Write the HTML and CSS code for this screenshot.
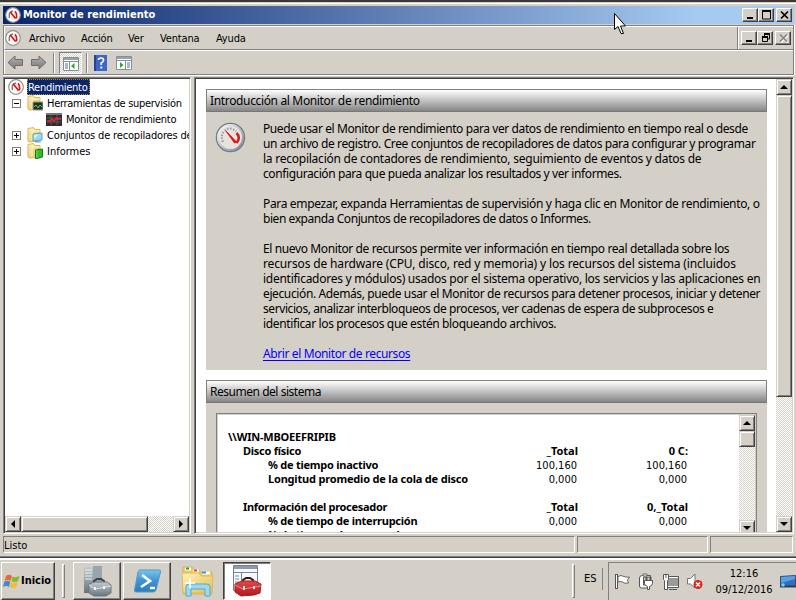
FILE: index.html
```html
<!DOCTYPE html>
<html lang="es">
<head>
<meta charset="utf-8">
<title>Monitor de rendimiento</title>
<link rel="stylesheet" href="styles.css">
</head>
<body>
<svg class="defs" width="0" height="0">
  <defs>
    <linearGradient id="folder" x1="0" y1="0" x2="1" y2="1"><stop offset="0" stop-color="#fff3b8"/><stop offset="1" stop-color="#e2bd52"/></linearGradient>
    <linearGradient id="ps" x1="0" y1="0" x2="0" y2="1"><stop offset="0" stop-color="#7cc4ea"/><stop offset=".5" stop-color="#3d93cf"/><stop offset="1" stop-color="#2e7cbc"/></linearGradient>
    <linearGradient id="steel" x1="0" y1="0" x2="0" y2="1"><stop offset="0" stop-color="#c3ccd0"/><stop offset="1" stop-color="#66757d"/></linearGradient>
    <linearGradient id="red" x1="0" y1="0" x2="0" y2="1"><stop offset="0" stop-color="#e2494a"/><stop offset="1" stop-color="#b0161c"/></linearGradient>
    <linearGradient id="arrow" x1="0" y1="0" x2="0" y2="1"><stop offset="0" stop-color="#b4b4b4"/><stop offset="1" stop-color="#777"/></linearGradient>
    <linearGradient id="ring" x1="0" y1="0" x2="1" y2="1"><stop offset="0" stop-color="#fff"/><stop offset="1" stop-color="#79828a"/></linearGradient>
    <symbol id="gauge" viewBox="0 0 16 16"><circle cx="8" cy="8" r="7.3" fill="#f6f5f3" stroke="#8d9090" stroke-width="1.2"/><circle cx="8" cy="8" r="5.9" fill="none" stroke="#fff"/><path d="M4.300 11V7.200Q5 4.500 8 4.200" fill="none" stroke="#777" stroke-width="1.300"/><path d="M5.300 5 10.500 11.500M9.800 4.500Q12 5.500 11.500 11.500" fill="none" stroke="#e00d10" stroke-width="1.600"/></symbol>
    <symbol id="dir" viewBox="0 0 16 16"><path d="M1 1.500 6.500.5 8 2.500h5V14L2 15 .8 13Z" fill="url(#folder)" stroke="#d2a947" stroke-width=".8"/><path d="M5 2v11.500M5 4h8" stroke="#fff7cd" fill="none"/></symbol>
  </defs>
</svg>

<div class="window">
  <header class="titlebar">
    <svg class="i16"><use href="#gauge"/></svg>
    <h1>Monitor de rendimiento</h1>
    <div class="controls">
      <span class="btn"><svg width="12" height="10"><path d="M2 7h6v2H2z"/></svg></span>
      <span class="btn"><svg width="12" height="10"><path d="M1.500 1v8h8V1z" fill="none" stroke="#000"/><path d="M1 0h9v2H1z"/></svg></span>
      <span class="btn close"><svg width="12" height="10"><path d="m2 1.500 7 7m0-7-7 7" stroke="#000" stroke-width="1.700"/></svg></span>
    </div>
  </header>

  <div class="bars">
    <nav class="menubar">
      <svg class="i16"><use href="#gauge"/></svg>
      <span class="m1">Archivo</span><span class="m2">Acción</span><span class="m3">Ver</span><span class="m4">Ventana</span><span class="m5">Ayuda</span>
      <div class="mdi">
        <span class="btn"><svg width="12" height="10"><path d="M2 7h6v2H2z"/></svg></span>
        <span class="btn"><svg width="12" height="10"><path d="M4 0h6v2H4zM2 3h6v2H2z"/><path d="M4.500 1v2M9.500 1v5H8M2.500 4v4.500h5V4" fill="none" stroke="#000"/></svg></span>
        <span class="btn close"><svg width="12" height="10"><path d="m3 2.500 7 7m0-7-7 7" stroke="#fff" stroke-width="1.500"/><path d="m2 1.500 7 7m0-7-7 7" stroke="#808080" stroke-width="1.500"/></svg></span>
      </div>
    </nav>
    <div class="toolbar">
      <svg width="17" height="15" class="back"><path d="M1 7.500 8 1v3.500h7.500v6H8V14Z" fill="url(#arrow)" stroke="#6c6c6c"/></svg>
      <svg width="17" height="15" class="fwd"><path d="M16 7.500 9 1v3.500H1.500v6H9V14Z" fill="url(#arrow)" stroke="#6c6c6c"/></svg>
      <i class="sep s1"></i>
      <span class="toggled"><svg width="16" height="14"><path d="M.5.5h15v13H.5z" fill="#fff" stroke="#868e96"/><path d="M1 1h14v2H1z" fill="#99a2ac"/><path d="M1 4.500h14M6.500 5v8" stroke="#868e96"/><path d="M2 7h3M2 9h3M2 11h3" stroke="#4c6fb0"/><path d="M11.500 6v6L8 9z" fill="#2caa22"/></svg></span>
      <i class="sep s2"></i>
      <svg width="13" height="16" class="help"><path d="M0 0h13v16H0z" fill="#3d66c8"/><path d="M0 0h2v16H0z" fill="#2144a0"/><path d="M4.500 5Q4.500 3 7 3t2.500 2.200Q9.500 7 7.200 8v2" fill="none" stroke="#fff" stroke-width="1.700"/><path d="M6.300 11.500h2v2h-2z" fill="#fff"/></svg>
      <svg width="16" height="14" class="show"><path d="M.5.5h15v13H.5z" fill="#fff" stroke="#868e96"/><path d="M1 1h14v2H1z" fill="#99a2ac"/><path d="M1 4.500h14M9.500 5v8" stroke="#868e96"/><path d="M11 7h3M11 9h3M11 11h3" stroke="#4c6fb0"/><path d="M4 6v6L7.500 9z" fill="#2caa22"/></svg>
    </div>
  </div>

  <div class="panes">
    <aside class="pane tree-pane">
      <ul class="tree">
        <li class="r0"><svg class="i16"><use href="#gauge"/></svg><span class="sel">Rendimiento</span></li>
        <li class="r1"><i class="box"></i><svg class="i16"><use href="#dir"/><path d="M6 7h10v8H6z" fill="#262e28" stroke="#929b90"/><path d="m7 12 2-2 2 3 2-3 2 2" fill="none" stroke="#4bd34b"/></svg><span class="t1">Herramientas de supervisión</span></li>
        <li class="r2"><svg class="i16"><path d="M0 2h16v13H0z" fill="#302c2e"/><path d="M0 2h16v2H0z" fill="#77787a"/><path d="M1 7h14M1 11h14M5 4v10M11 4v10" stroke="#5b5456"/><path d="M1 10h3l2-2 2 2 3-3 1 1h3" fill="none" stroke="#ef2733" stroke-width="1.500"/></svg><span class="t2">Monitor de rendimiento</span></li>
        <li class="r1"><i class="box plus"></i><svg class="i16"><use href="#dir"/><path d="m6 7 9-1v7l-9 1z" fill="#9cd8ef" stroke="#5aa6c8"/><path d="m7 8 5-1-5 5z" fill="#d6f3fd"/><path d="M8 15h6" stroke="#7b98a5"/></svg><span class="t3">Conjuntos de recopiladores de datos</span></li>
        <li class="r1"><i class="box plus"></i><svg class="i16"><use href="#dir"/><path d="m8.500 7 7-1v8l-7 2z" fill="#37b72c" stroke="#157c16"/><path d="M10 7v8" stroke="#76dc68"/></svg><span class="t4">Informes</span></li>
      </ul>
      <div class="hscroll"><span class="sb"><svg width="8" height="8"><path d="M6 0v8L2 4z"/></svg></span><span class="thumb"></span><span class="track"></span><span class="sb"><svg width="8" height="8"><path d="M2 0v8l4-4z"/></svg></span></div>
    </aside>

    <main class="pane main-pane">
      <div class="content">
        <section class="card intro">
          <h2 class="h-a">Introducción al Monitor de rendimiento</h2>
          <div class="intro-body">
            <svg width="31" height="31" viewBox="0 0 31 31"><circle cx="15.500" cy="15.500" r="14" fill="#e6e3de" stroke="#707b84" stroke-width="1.500"/><circle cx="15.500" cy="15.500" r="12.500" fill="none" stroke="url(#ring)" stroke-width="2"/><path d="M8 20Q5 13 10 8.500t11 1" fill="none" stroke="#999" stroke-width="2" stroke-dasharray="1.500 1.500"/><path d="M21.500 11Q26 15.500 21.500 21" fill="none" stroke="#d0201f" stroke-width="2.500"/><path d="m11 9 10.500 11-2 1Z" fill="#e11518" stroke="#e11518"/></svg>
            <div class="text">
              <p><span class="a1">Puede usar el Monitor de rendimiento para ver datos de rendimiento en tiempo real o desde</span><span class="a2">un archivo de registro. Cree conjuntos de recopiladores de datos para configurar y programar</span><span class="a3">la recopilación de contadores de rendimiento, seguimiento de eventos y datos de</span><span class="a4">configuración para que pueda analizar los resultados y ver informes.</span></p>
              <p><span class="a5">Para empezar, expanda Herramientas de supervisión y haga clic en Monitor de rendimiento, o</span><span class="a6">bien expanda Conjuntos de recopiladores de datos o Informes.</span></p>
              <p><span class="a7">El nuevo Monitor de recursos permite ver información en tiempo real detallada sobre los</span><span class="a8">recursos de hardware (CPU, disco, red y memoria) y los recursos del sistema (incluidos</span><span class="a9">identificadores y módulos) usados por el sistema operativo, los servicios y las aplicaciones en</span><span class="a10">ejecución. Además, puede usar el Monitor de recursos para detener procesos, iniciar y detener</span><span class="a11">servicios, analizar interbloqueos de procesos, ver cadenas de espera de subprocesos e</span><span class="a12">identificar los procesos que estén bloqueando archivos.</span></p>
              <p><a class="a13">Abrir el Monitor de recursos</a></p>
            </div>
          </div>
        </section>
        <section class="card summary">
          <h2 class="h-b">Resumen del sistema</h2>
          <div class="report">
            <div class="rows">
              <div class="row l0"><b class="b1">\\WIN-MBOEEFRIPIB</b></div>
              <div class="row l1"><b class="b2">Disco físico</b><b>_Total</b><b>0 C:</b></div>
              <div class="row l2"><b class="b3">% de tiempo inactivo</b><span>100,160</span><span>100,160</span></div>
              <div class="row l2"><b class="b4">Longitud promedio de la cola de disco</b><span>0,000</span><span>0,000</span></div>
              <div class="row"></div>
              <div class="row l1"><b class="b5">Información del procesador</b><b>_Total</b><b>0,_Total</b></div>
              <div class="row l2"><b class="b6">% de tiempo de interrupción</b><span>0,000</span><span>0,000</span></div>
              <div class="row l2"><b class="b7">% de tiempo de procesador</b></div>
            </div>
            <div class="vscroll inner"><span class="sb"><svg width="8" height="8"><path d="M0 6h8L4 2z"/></svg></span><span class="thumb"></span><span class="track"></span><span class="sb"><svg width="8" height="8"><path d="M0 2h8L4 6z"/></svg></span></div>
          </div>
        </section>
      </div>
      <div class="vscroll outer"><span class="sb"><svg width="8" height="8"><path d="M0 6h8L4 2z"/></svg></span><span class="thumb"></span><span class="track"></span><span class="sb"><svg width="8" height="8"><path d="M0 2h8L4 6z"/></svg></span></div>
    </main>
  </div>

  <footer class="status"><span>Listo</span><span></span><span></span></footer>
</div>

<div class="taskbar">
  <div class="start"><svg width="17" height="16" viewBox="0 0 17 16"><path d="M3 3Q6 .5 9 3L7.500 8Q4.500 6 1.500 8Z" fill="#ed6a2e"/><path d="M9.500 3.500Q12.500 5 16.500 3L15 8Q12 10 8.500 8.300Z" fill="#82b93c"/><path d="M1.300 8.700Q4 7 7.200 8.800L6 14Q3 12 0 14Z" fill="#4488d4"/><path d="M8 9Q11 10.800 15 8.800L13.500 14Q10.500 16 6.800 14.300Z" fill="#f4c02f"/></svg><b>Inicio</b></div>
  <i class="grip g1"></i>
  <div class="task t-a"><svg width="32" height="34" viewBox="0 0 32 34"><path d="M3 3h9v26H3z" fill="url(#steel)"/><path d="M12 2h9v20h-9z" fill="#9aa5ab"/><path d="M4 6h7M4 9h7M4 12h7M4 15h7" stroke="#eef1f2"/><path d="M13 19v-2l3-2h4l3 2v2" fill="none" stroke="#37434a" stroke-width="2"/><path d="m8 20 6-2h12l4 3v8l-5 3H13l-5-3z" fill="url(#steel)" stroke="#6b7980"/><path d="m8 21 6 4 16-3" fill="none" stroke="#dfe6e8"/><path d="M13 23h2v3h-2zm9-1h2v3h-2z" fill="#f2f4f4"/></svg></div>
  <div class="task t-b"><svg width="32" height="28" viewBox="0 0 32 28"><path d="M9 3h19q2 0 1.500 2L25 23q-.5 2-3 2H5q-2 0-1.500-2L7 5q.5-2 2-2Z" fill="url(#ps)" stroke="#4a9bd0"/><path d="m11 8 8 6-9 6m9 1h5" fill="none" stroke="#fff" stroke-width="2.600"/></svg></div>
  <div class="task t-c"><svg width="33" height="32" viewBox="0 0 33 32"><path d="M2 2h9l2 3h5l1 2h12v22H2z" fill="#edc966" stroke="#d9b457"/><path d="M4 4h6M12 6h6M21 8h8" stroke="#fff" stroke-width="3"/><path d="M5 3.500h3" stroke="#21a537" stroke-width="2"/><path d="M13 5.500h3" stroke="#df4034" stroke-width="2"/><path d="M21 7.500h4" stroke="#3a92d4" stroke-width="2"/><path d="M1 8h17l2 3h12l-1 17H2z" fill="url(#folder)" stroke="#dcb95c"/><path d="M5 31V22q0-3 3-3h18q3 0 3 3v9h-5v-7H10v7z" fill="#9bd8f2" stroke="#5aa6cf"/><path d="M9 13v10M4 18h10" stroke="#fff" stroke-width="1.500"/></svg></div>
  <div class="task t-d"><svg width="32" height="34" viewBox="0 0 32 34"><path d="M2.500 1.500h24v25h-24z" fill="#f8f9fa" stroke="#77818d"/><path d="M3 2h23v3H3z" fill="#8e99a8"/><path d="M3 8.500h23M10.500 9v17M4 12h4M4 15h4M4 18h4" stroke="#7687a4"/><path d="M12 18v-2l3-2h4l3 2v2" fill="none" stroke="#33191a" stroke-width="2"/><path d="m4 20 7-3h13l6 3-1 9-6 2-13 1-6-4z" fill="url(#red)" stroke="#a8191c"/><path d="m4 21 8 4 18-3" fill="none" stroke="#ee8989"/><path d="M12 22h2v4h-2zm10 0h2v3h-2z" fill="#f3e8e8"/></svg></div>
  <i class="grip g2"></i>
  <span class="lang">ES</span>
  <i class="grip g3"></i>
  <div class="tray">
    <svg width="18" height="18"><path d="M2.500 1v15" stroke="#555" stroke-width="3"/><path d="M2.500 2v13" stroke="#fff"/><path d="M4 3.500q3-2 6 0 2 1 5.500.5l-2 3 1 3q-4 1-6-1-2-1-4.500 0z" fill="#fff" stroke="#666"/></svg>
    <svg width="18" height="18"><path d="M1.500 5v8q0 2 2 2h8v-3h-6V4h7V2.500h-8Q1.500 2.500 1.500 5Z" fill="#fff" stroke="#555"/><path d="M5 1h4v2H5z" fill="#fff" stroke="#666"/><path d="M8.500 4v4m4-4v4" stroke="#555" stroke-width="2"/><path d="M6.500 7.500h8v3q-1 3-3 3v3h-2v-3q-3-1-3-3z" fill="#fff" stroke="#555"/></svg>
    <svg width="18" height="18"><path d="M5.500 4.500h11v9h-11z" fill="#999" stroke="#fff"/><path d="M4.500 3.500h12v11h-12zM7 16.500h8" fill="none" stroke="#555"/><path d="M1.500 1.500h5v5l-1 1v9h-3v-9l-1-1zM4 1v4" fill="#fff" stroke="#555"/></svg>
    <svg width="18" height="18"><path d="M1.500 5.500h3L9 1v14l-4.500-4h-3z" fill="#fff" stroke="#777"/><circle cx="12" cy="11.500" r="4.500" fill="#d9251c"/><path d="m10 9.500 4 4m0-4-4 4" stroke="#fff" stroke-width="1.500"/></svg>
    <div class="clock"><span>12:16</span><span>09/12/2016</span></div>
    <svg width="16" height="13" class="desk"><path d="M.5 1.500 15.500.5v10L.5 11.500z" fill="#2c70c4" stroke="#285188"/><path d="m1 2 14-1v3L1 8z" fill="#5b9fe2"/><path d="M0 10.500h16v2H0z" fill="#34404c"/><circle cx="3" cy="10" r="1.800" fill="#6fd0ef"/></svg>
  </div>
</div>

<svg class="cursor" width="13" height="22"><path d="M.5.5v16L4 13.500l3 7h2.500l-3-7.500h5z" fill="#fff" stroke="#000"/></svg>
</body>
</html>
```
FILE: styles.css
```css
* { box-sizing: border-box; }
html, body { margin: 0; padding: 0; }
body {
  width: 796px; height: 600px; overflow: hidden; position: relative;
  background: #d4d0c8; color: #000;
  font: 11px/16px "DejaVu Sans Condensed", "DejaVu Sans", sans-serif;
}
svg { display: block; flex: none; }
i { display: block; flex: none; }
.defs { position: absolute; }
.i16 { width: 16px; height: 16px; }

.window {
  height: 558px; border-top: 2px solid #3b3835; border-bottom: 1px solid #404040;
  display: flex; flex-direction: column; padding-left: 3px;
  box-shadow: inset 0 1px #d4d0c8, inset 0 2px #fff, inset 0 -1px #808080;
}
.titlebar {
  height: 18px; margin: 4px 2px 1px 0; flex: none; padding: 1px 2px;
  background: linear-gradient(90deg, #0a246a, #a6caf0 88%);
  display: flex; align-items: center;
}
.titlebar h1 { margin: 0 0 0 2px; color: #fff; font-size: 11px; font-weight: bold; white-space: nowrap; }
.controls, .mdi { display: flex; align-items: center; margin-left: auto; }
.btn {
  width: 16px; height: 14px; padding: 1px 2px; background: #d4d0c8;
  border: 1px solid; border-color: #fff #404040 #404040 #fff;
  box-shadow: inset -1px -1px #808080; overflow: hidden;
}
.btn.close { margin-left: 2px; }

.bars { height: 50px; flex: none; margin-right: 2px; border: 1px solid #808080; box-shadow: 0 1px #fff, 1px 0 #fff; }
.menubar { height: 24px; border-top: 1px solid #fff; border-left: 1px solid #fff; border-bottom: 1px solid #808080; display: flex; align-items: center; }
.menubar span { white-space: nowrap; }
.menubar > span { padding-top: 1px; letter-spacing: -0.15px; }
.menubar .m1 { width: 52px; margin-left: 8px; }
.m2 { width: 47px; }
.m3 { width: 32px; }
.m4 { width: 56px; }
.mdi { align-self: stretch; border-left: 1px solid #808080; box-shadow: inset 1px 0 #fff; padding: 0 2px 0 3px; }
.toolbar { height: 24px; border-top: 1px solid #fff; border-left: 1px solid #fff; display: flex; align-items: center; padding-left: 2px; }
.fwd { margin-left: 6px; }
.sep { width: 2px; height: 20px; border-left: 1px solid #808080; border-right: 1px solid #fff; }
.s1 { margin-left: 6px; }
.s2 { margin-left: 4px; }
.toggled { width: 23px; height: 22px; margin-left: 4px; padding: 4px 3px; background: repeating-conic-gradient(#fff 0 25%, #d4d0c8 0 50%) 0 0 / 2px 2px; border: 1px solid; border-color: #808080 #fff #fff #808080; }
.help { margin-left: 6px; }
.show { margin-left: 9px; }

.panes { flex: none; height: 457px; margin-top: 2px; display: flex; gap: 3px; }
.pane { border: 1px solid; border-color: #808080 #fff #fff #808080; background: #fff; overflow: hidden; box-shadow: inset 1px 1px #404040, inset -1px -1px #d4d0c8; padding: 1px; }
.tree-pane { width: 188px; display: flex; flex-direction: column; }
.main-pane { width: 600px; display: flex; }
.tree { list-style: none; margin: 0; padding: 0; flex: 1; overflow: hidden; }
.tree li { display: flex; height: 16px; align-items: center; white-space: nowrap; }
.tree .r0 { padding-left: 3px; }
.tree .r1 { padding-left: 7px; }
.tree .r2 { padding-left: 41px; }
.tree span { margin-left: 4px; height: 16px; line-height: 17px; }
.tree .sel { background: #0a246a; color: #fff; margin-left: 3px; padding: 0 2px 0 1px; width: 63px; outline: 1px dotted #b09030; outline-offset: -1px; letter-spacing: -0.27px; }
.t1 { letter-spacing: -0.3px; }
.t2 { letter-spacing: -0.27px; }
.t3 { letter-spacing: -0.17px; }
.box { width: 9px; height: 9px; border: 1px solid #808080; margin-right: 6px; background: linear-gradient(#000, #000) center / 5px 1px no-repeat; }
.box.plus { background: linear-gradient(#000, #000) center / 5px 1px no-repeat, linear-gradient(#000, #000) center / 1px 5px no-repeat; }

.hscroll { height: 16px; display: flex; flex: none; }
.vscroll { width: 16px; display: flex; flex-direction: column; flex: none; }
.sb, .thumb { background: #d4d0c8; border: 1px solid; border-color: #d4d0c8 #404040 #404040 #d4d0c8; box-shadow: inset 1px 1px #fff, inset -1px -1px #808080; flex: none; }
.sb { width: 16px; height: 16px; padding: 3px; }
.track { flex: 1; background: repeating-conic-gradient(#fff 0 25%, #d4d0c8 0 50%) 0 0 / 2px 2px; }
.hscroll .thumb { width: 127px; }
.outer .thumb { height: 302px; }
.inner .thumb { height: 16px; }

.content { flex: 1; padding: 10px 10px 0; overflow: hidden; }
.content, .card, .text { min-width: 0; }
.card { background: #d4d0c8; width: 561px; }
.card h2 {
  margin: 0; height: 23px; padding-left: 3px; border: 1px solid #808080; border-bottom-color: #777;
  background: linear-gradient(#fff, #858585);
  font: 12px/21px "Noto Sans", "Open Sans", sans-serif; white-space: nowrap;
}
.card .h-a { letter-spacing: -0.35px; }
.card .h-b { letter-spacing: -0.47px; }
.intro { height: 281px; }
.intro-body { display: flex; padding: 10px 0 0 9px; }
.text { margin: -1px 0 0 17px; font: 12px/15px "Noto Sans", "Open Sans", sans-serif; }
.text p { margin: 0 0 15px; }
.text span { display: block; width: max-content; white-space: nowrap; }
.text a { color: #00f; text-decoration: underline; text-underline-offset: 2px; }
.a1 { letter-spacing: -0.41px; }
.a2 { letter-spacing: -0.38px; }
.a3 { letter-spacing: -0.24px; }
.a4 { letter-spacing: -0.4px; }
.a5 { letter-spacing: -0.34px; }
.a6 { letter-spacing: -0.44px; }
.a7 { letter-spacing: -0.38px; }
.a8 { letter-spacing: -0.14px; }
.a9 { letter-spacing: -0.27px; }
.a10 { letter-spacing: -0.38px; }
.a11 { letter-spacing: -0.42px; }
.a12 { letter-spacing: -0.36px; }
.a13 { letter-spacing: -0.39px; }

.summary { height: 170px; margin-top: 10px; }
.report { display: flex; height: 124px; margin: 10px 10px 0; background: #fff; border: 1px solid #808080; box-shadow: inset 1px 1px #d4d0c8, inset -1px 0 #d4d0c8; padding: 1px 1px 0; }
.rows { flex: 1; padding: 15px 0 0 10px; font: 11px/14px "Noto Sans", sans-serif; }
.row { height: 14px; display: grid; grid-template-columns: 240px 110px 110px; white-space: nowrap; }
.row > :not(:first-child) { text-align: right; }
.row span { padding-right: 1px; font: 11px/16px "DejaVu Sans Condensed", sans-serif; }
.l1 > :first-child { padding-left: 15px; }
.l2 > :first-child { padding-left: 40px; }
.b1 { letter-spacing: -0.2px; }
.b3 { letter-spacing: -0.25px; }
.b4 { letter-spacing: -0.19px; }
.b5 { letter-spacing: -0.3px; }
.b2, .b6, .b7 { letter-spacing: -0.26px; }

.status { display: grid; grid-template-columns: 572px 131px 83px; gap: 2px; height: 16px; margin-top: 2px; flex: none; }
.status span { border: 1px solid; border-color: #808080 #fff #fff #808080; height: 17px; padding-top: 1px; }

.taskbar { height: 42px; display: flex; align-items: flex-start; padding: 4px 0 0 1px; box-shadow: inset 0 2px #fff, inset 0 1px #d4d0c8; }
.start, .task { height: 38px; border: 1px solid; border-color: #fff #404040 #404040 #fff; box-shadow: inset -1px -1px #808080; display: flex; align-items: center; flex: none; }
.start { width: 54px; padding-left: 1px; }
.start b { margin-left: 1px; }
.grip { height: 34px; margin-top: 2px; width: 3px; border: 1px solid; border-color: #fff #808080 #808080 #fff; }
.g1 { margin-left: 7px; }
.task { width: 48px; justify-content: center; }
.t-a { margin-left: 8px; }
.t-b { margin-left: 2px; }
.t-c { border-color: transparent; box-shadow: none; margin-left: 2px; }
.t-d { margin-left: 2px; border-color: #404040 #fff #fff #404040; background: #fff; box-shadow: inset 1px 1px #808080; }
.g2 { margin-left: 301px; }
.lang { margin: 9px 0 0 9px; width: 19px; }
.g3 { width: 2px; height: 22px; margin: 6px 0 0 1px; border-width: 0 1px 0 0; }
.tray { flex: 1; margin-left: 5px; height: 38px; border: 1px solid #808080; border-width: 1px 0 0 1px; display: flex; align-items: center; gap: 6px; padding-left: 5px; }
.clock { width: 60px; margin-left: 4px; text-align: center; display: flex; flex-direction: column; align-items: center; }
.cursor { position: absolute; left: 614px; top: 13px; }
```
